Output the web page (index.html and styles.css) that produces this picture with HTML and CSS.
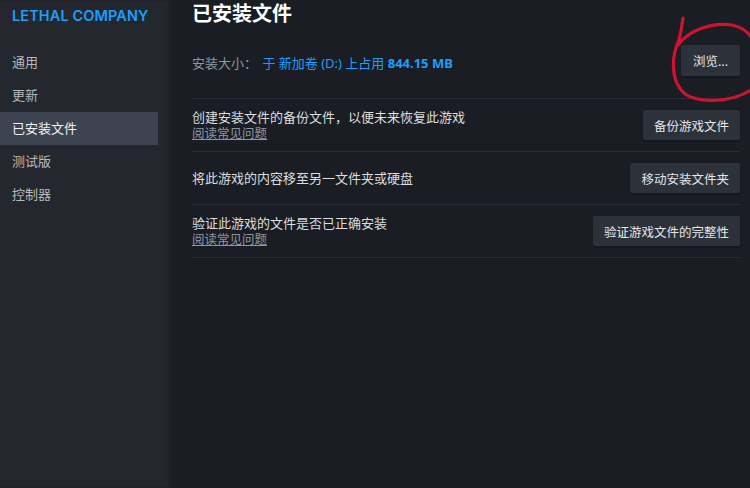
FILE: index.html
```html
<!DOCTYPE html>
<html lang="zh-CN">
<head>
  <meta charset="UTF-8" />
  <meta name="viewport" content="width=device-width, initial-scale=1.0" />
  <title>LETHAL COMPANY – 已安装文件</title>
  <link rel="stylesheet" href="styles.css">
</head>

<body>
  <div class="app">
    <aside class="sidebar">
      <div class="game-title">LETHAL COMPANY</div>
      <nav class="nav">
        <a class="nav-item" href="#">通用</a>
        <a class="nav-item" href="#">更新</a>
        <a class="nav-item active" href="#">已安装文件</a>
        <a class="nav-item" href="#">测试版</a>
        <a class="nav-item" href="#">控制器</a>
      </nav>
    </aside>

    <main class="content">
      <h1>已安装文件</h1>

      <!-- taille -->
      <div class="row size-row">
        <div class="size-info">
          <span class="label">安装大小：</span>
          <span class="value">于 新加卷 (D:) 上占用 <strong>844.15 MB</strong></span>
        </div>
        <button class="btn browse-btn">浏览...</button>
      </div>

      <div class="row">
        <div class="row-text">
          <p>创建安装文件的备份文件，以便未来恢复此游戏</p>
          <a class="faq" href="#">阅读常见问题</a>
        </div>
        <button class="btn">备份游戏文件</button>
      </div>

      <div class="row">
        <div class="row-text">
          <p>将此游戏的内容移至另一文件夹或硬盘</p>
        </div>
        <button class="btn">移动安装文件夹</button>
      </div>

      <div class="row">
        <div class="row-text">
          <p>验证此游戏的文件是否已正确安装</p>
          <a class="faq" href="#">阅读常见问题</a>
        </div>
        <button class="btn">验证游戏文件的完整性</button>
      </div>
    </main>
  </div>

  <!-- annotation à la main -->
  <svg class="scribble" width="100" height="100" viewBox="660 10 100 100">
    <path d="M683 18 C682 26 681 32 679 40 C672 55 669 80 685 94 C700 104 732 102 751 90"
          fill="none" stroke="#cf1230" stroke-width="3.2" stroke-linecap="round" />
    <path d="M678 45 C689 30 712 22 732 25 C742 27 748 32 752 38"
          fill="none" stroke="#cf1230" stroke-width="3.2" stroke-linecap="round" />
  </svg>
</body>
</html>
```

FILE: styles.css
```css
:root {
  --sidebar-bg: #24272d;
  --main-bg: #1a1d24;
  --active-bg: #3d4350;
  --line: #2a2e36;
  --btn-bg: #2d3139;
  --text: #dcdedf;
  --muted: #8f969e;
  --steam-blue: #1a9fff;
}

body {
  margin: 0;
  background: var(--main-bg);
  color: var(--text);
  font-family: "Noto Sans", "Noto Sans CJK SC", sans-serif;
  font-size: 13px;
  overflow: hidden;
}

.app {
  display: flex;
  height: 488px;
}

.sidebar {
  width: 158px;
  padding-right: 13px;
  background: var(--sidebar-bg);
  box-shadow: inset -2px 0 3px rgba(0, 0, 0, 0.25);
}

.game-title {
  padding: 6px 0 0 12px;
  height: 24px;
  font-family: "Inter", "Noto Sans", sans-serif;
  font-weight: 600;
  font-size: 14.5px;
  line-height: 20px;
  color: var(--steam-blue);
  letter-spacing: 0.1px;
}

.nav {
  display: flex;
  flex-direction: column;
  margin-top: 16px;
}

.nav-item {
  display: block;
  height: 33px;
  line-height: 33px;
  padding-left: 12px;
  color: #b6babe;
  text-decoration: none;
  font-size: 13px;
}

.nav-item.active {
  background: var(--active-bg);
  color: #f2f2f2;
}

.content {
  flex: 1;
  padding: 0 10px 0 21px;
}

h1 {
  margin: 0;
  height: 30px;
  line-height: 28px;
  font-size: 20px;
  font-weight: 700;
  color: #fff;
}

.row {
  display: flex;
  align-items: center;
  justify-content: space-between;
  height: 52px;
  border-bottom: 1px solid var(--line);
}

.size-row {
  height: 68px;
  align-items: flex-start;
}

.size-row .size-info {
  margin-top: 23px;
}

.size-row .browse-btn {
  margin-top: 15px;
}

.label {
  color: var(--muted);
  margin-right: 2px;
}

.value {
  color: var(--steam-blue);
}

.value strong {
  font-weight: 700;
}

.row-text p {
  margin: 0;
  line-height: 17px;
}

.faq {
  display: block;
  color: var(--muted);
  font-size: 12.5px;
  line-height: 16px;
  text-decoration: underline;
}

.btn {
  height: 30px;
  padding: 0 11px;
  background: var(--btn-bg);
  color: #e4e6e8;
  border: none;
  border-radius: 2px;
  font-family: inherit;
  font-size: 12.5px;
  cursor: pointer;
  box-shadow: 0 1px 2px rgba(0, 0, 0, 0.3);
}

.browse-btn {
  height: 31px;
  padding: 0 12px;
}

.btn:hover {
  background: #3d4450;
}

.scribble {
  position: absolute;
  left: 660px;
  top: 10px;
  pointer-events: none;
}
```
